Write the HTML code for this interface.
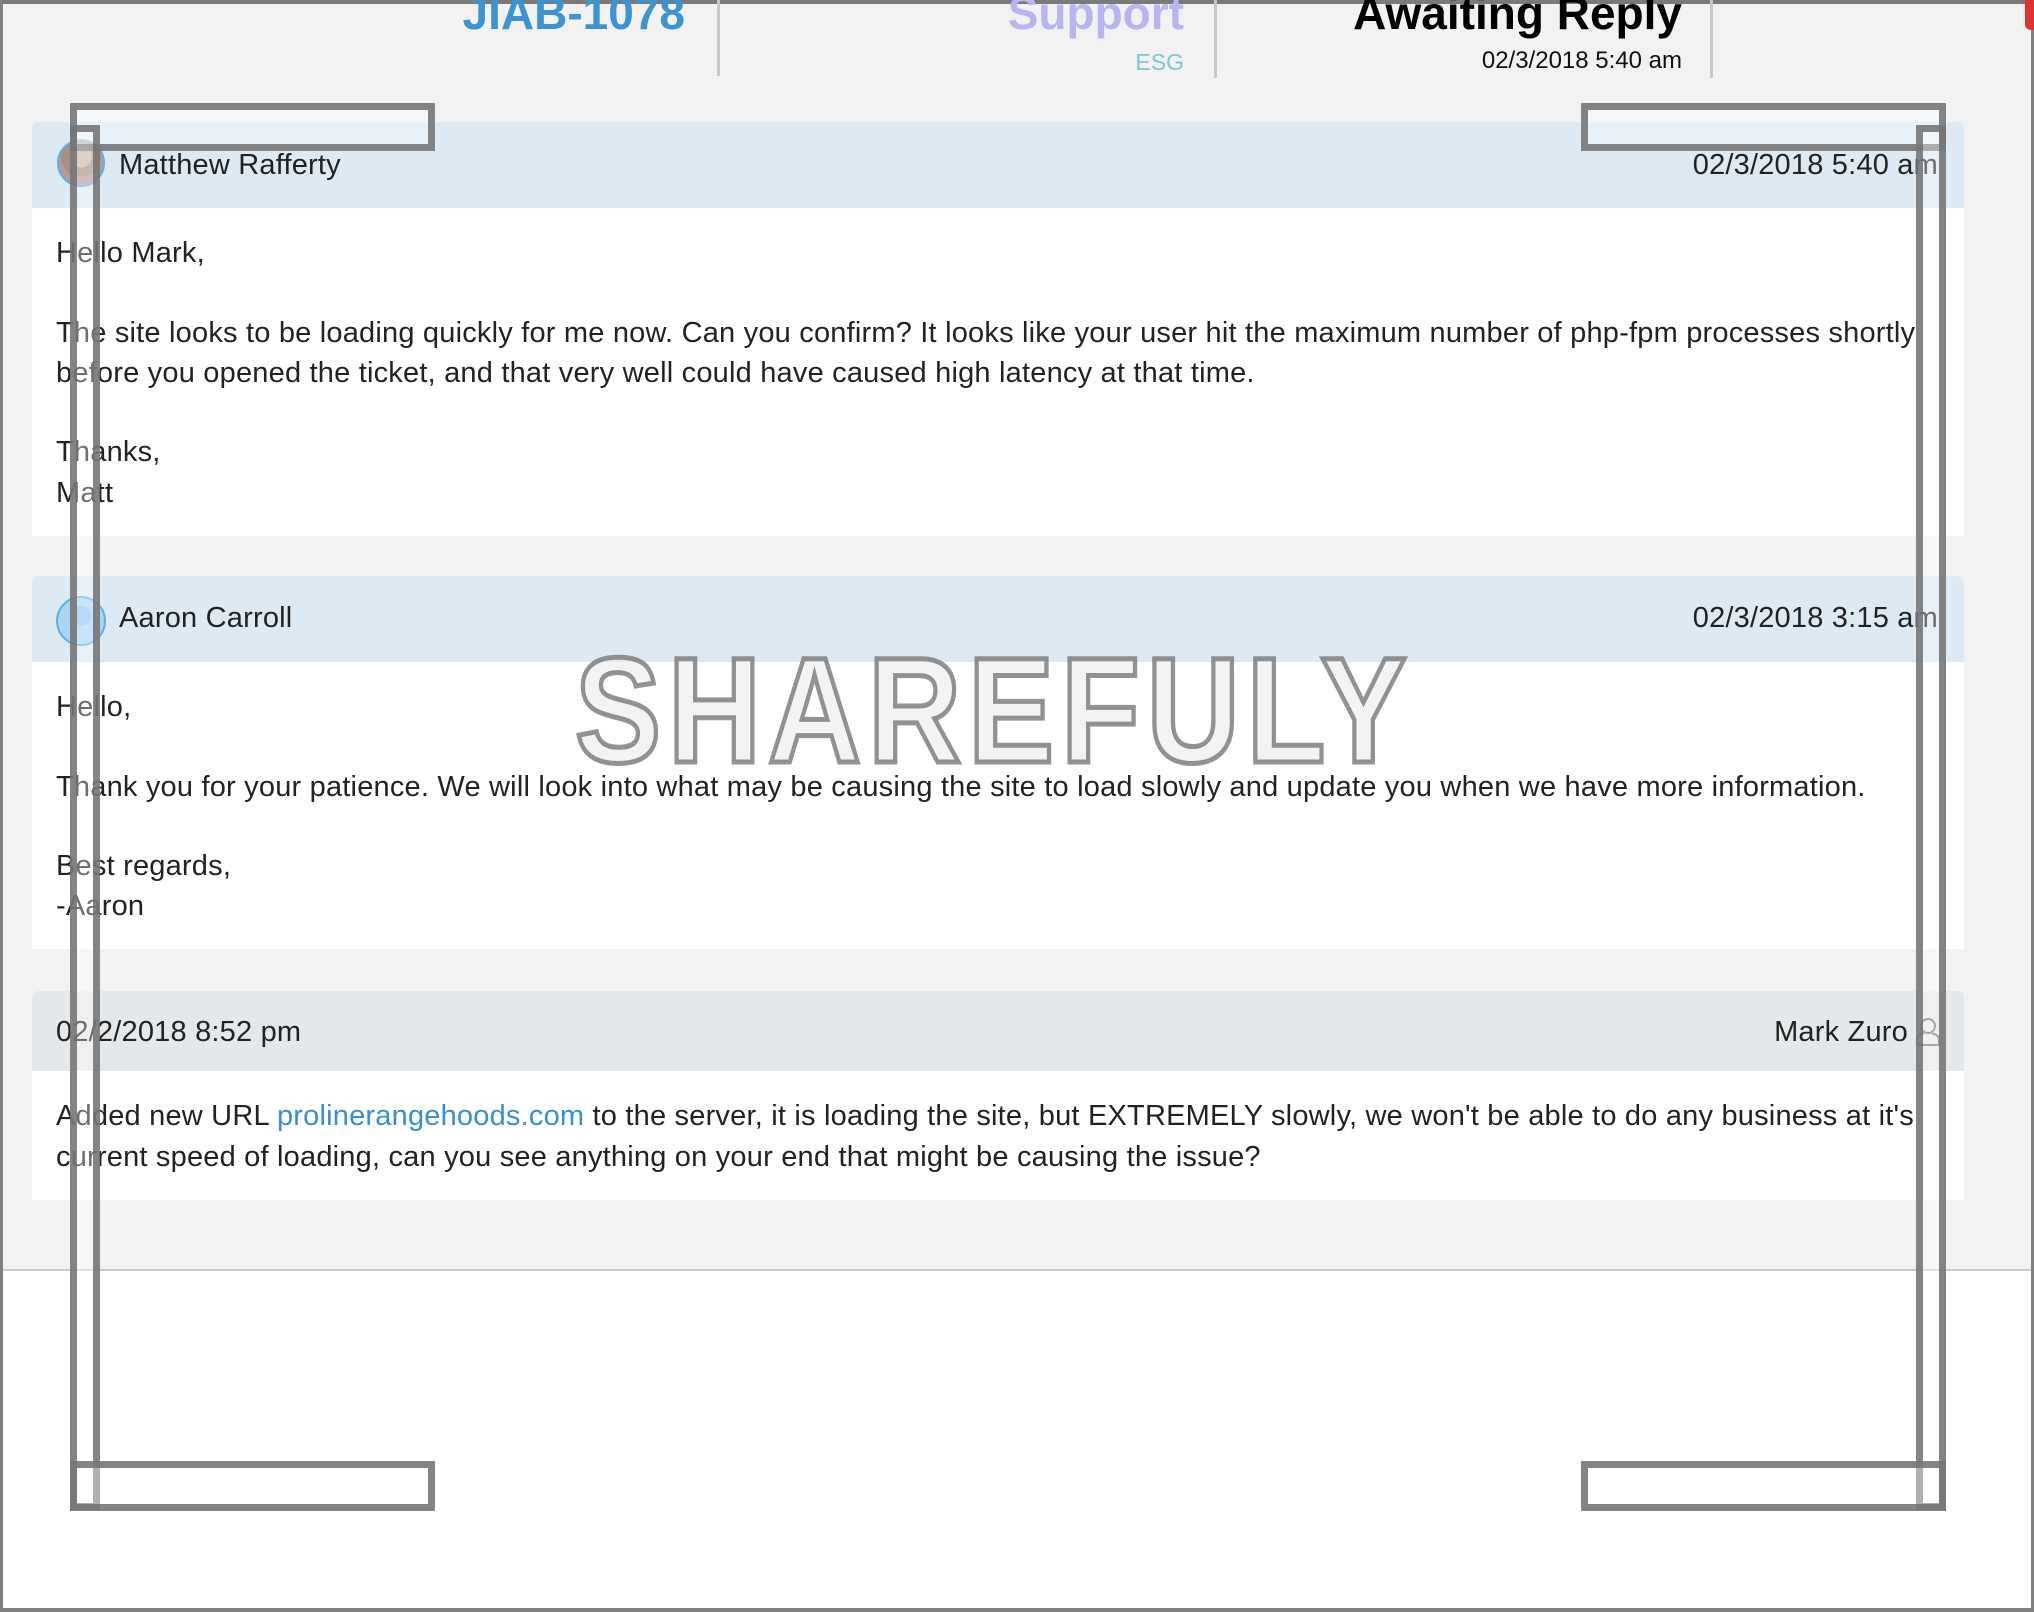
<!DOCTYPE html>
<html><head><meta charset="utf-8"><style>
*{margin:0;padding:0;box-sizing:border-box}
body{width:2034px;height:1612px;position:relative;overflow:hidden;background:#fff;font-family:"Liberation Sans",sans-serif;color:#222}
.a{position:absolute;white-space:nowrap}
.t{font-size:29px;line-height:40px;letter-spacing:0.2px}
.bar{position:absolute;border:7px solid rgba(110,110,110,.85);background:rgba(255,255,255,.35)}
.h{font-size:46px;line-height:60px;font-weight:bold;top:-17px}
</style></head><body>
<div class="a" style="left:0;top:0;width:2034px;height:1271px;background:#f2f2f2;border-bottom:2px solid #ccc"></div>
<div class="a" style="left:0;top:0;width:2034px;height:4px;background:#7a7a7a"></div>
<div class="a" style="left:0;top:0;width:3px;height:1612px;background:#808080"></div>
<div class="a" style="right:0;top:0;width:3px;height:1612px;background:#808080"></div>
<div class="a" style="left:0;bottom:0;width:2034px;height:4px;background:#808080"></div>
<div class="a" style="left:2025px;top:0;width:9px;height:30px;background:#d33;border-radius:0 0 0 6px"></div>

<!-- header -->
<div class="a h" style="right:1349px;color:#3d94d1">JIAB-1078</div>
<div class="a" style="left:717px;top:0;width:3px;height:76px;background:#c8c8c8"></div>
<div class="a h" style="right:850px;color:#b9b5f2">Support</div>
<div class="a" style="right:850px;top:48px;font-size:23px;line-height:28px;color:#7cc8d2">ESG</div>
<div class="a" style="left:1214px;top:0;width:3px;height:78px;background:#c8c8c8"></div>
<div class="a h" style="right:352px;color:#000">Awaiting Reply</div>
<div class="a" style="right:352px;top:47px;font-size:24px;line-height:28px;color:#111">02/3/2018 5:40 am</div>
<div class="a" style="left:1710px;top:0;width:3px;height:78px;background:#c8c8c8"></div>

<!-- card 1 -->
<div class="a" style="left:32px;top:122px;width:1932px;height:86px;background:#ddeaf4;border-radius:6px 6px 0 0"></div>
<div class="a" style="left:32px;top:208px;width:1932px;height:328px;background:#fff"></div>
<div class="a" style="left:57px;top:139px;width:48px;height:48px;border-radius:50%;border:2px solid #5fb0e0;background:radial-gradient(circle at 50% 35%,#c9b8a8 0 30%,#a89080 31% 55%,#b89a9a 56%)"></div>
<div class="a t" style="left:119px;top:145px">Matthew Rafferty</div>
<div class="a t" style="right:96px;top:145px">02/3/2018 5:40 am</div>
<div class="a t" style="left:56px;top:233px">Hello Mark,</div>
<div class="a t" style="left:56px;top:313px">The site looks to be loading quickly for me now. Can you confirm? It looks like your user hit the maximum number of php-fpm processes shortly</div>
<div class="a t" style="left:56px;top:353px">before you opened the ticket, and that very well could have caused high latency at that time.</div>
<div class="a t" style="left:56px;top:432px">Thanks,</div>
<div class="a t" style="left:56px;top:473px">Matt</div>

<!-- card 2 -->
<div class="a" style="left:32px;top:576px;width:1932px;height:86px;background:#ddeaf4;border-radius:6px 6px 0 0"></div>
<div class="a" style="left:32px;top:662px;width:1932px;height:287px;background:#fff"></div>
<div class="a" style="left:56px;top:596px;width:50px;height:50px;border-radius:50%;border:2px solid #5fb0e0;background:radial-gradient(circle at 50% 38%,#8fc6ee 0 26%,#a9d6f5 27%)"></div>
<div class="a t" style="left:119px;top:598px">Aaron Carroll</div>
<div class="a t" style="right:96px;top:598px">02/3/2018 3:15 am</div>
<div class="a t" style="left:56px;top:687px">Hello,</div>
<div class="a t" style="left:56px;top:767px">Thank you for your patience. We will look into what may be causing the site to load slowly and update you when we have more information.</div>
<div class="a t" style="left:56px;top:846px">Best regards,</div>
<div class="a t" style="left:56px;top:886px">-Aaron</div>

<!-- card 3 -->
<div class="a" style="left:32px;top:991px;width:1932px;height:80px;background:#e5e8eb;border-radius:6px 6px 0 0"></div>
<div class="a" style="left:32px;top:1071px;width:1932px;height:129px;background:#fff"></div>
<div class="a t" style="left:56px;top:1012px">02/2/2018 8:52 pm</div>
<div class="a t" style="right:126px;top:1012px">Mark Zuro</div>
<svg class="a" style="left:1915px;top:1017px" width="26" height="30" viewBox="0 0 26 30"><circle cx="13" cy="9" r="7" fill="none" stroke="#777" stroke-width="2"/><path d="M2 28 V24 Q2 17 9 16.5 M24 28 V24 Q24 17 17 16.5 M2 28 H24" fill="none" stroke="#777" stroke-width="2"/></svg>
<div class="a t" style="left:56px;top:1096px">Added new URL <span style="color:#3a8fd2">prolinerangehoods.com</span> to the server, it is loading the site, but EXTREMELY slowly, we won't be able to do any business at it's</div>
<div class="a t" style="left:56px;top:1137px">current speed of loading, can you see anything on your end that might be causing the issue?</div>

<!-- watermark -->
<div class="bar" style="left:70px;top:103px;width:365px;height:48px"></div>
<div class="bar" style="left:70px;top:125px;width:30px;height:1385px"></div>
<div class="bar" style="left:70px;top:1461px;width:365px;height:50px"></div>
<div class="bar" style="left:1581px;top:103px;width:365px;height:48px"></div>
<div class="bar" style="left:1916px;top:125px;width:30px;height:1385px"></div>
<div class="bar" style="left:1581px;top:1461px;width:365px;height:50px"></div>
<div class="a" style="left:575px;top:630px;font-size:150px;line-height:160px;font-weight:bold;letter-spacing:8px;color:rgba(235,235,235,.6);-webkit-text-stroke:5px rgba(120,120,120,.8);transform:scaleX(0.86);transform-origin:left top">SHAREFULY</div>
</body></html>
